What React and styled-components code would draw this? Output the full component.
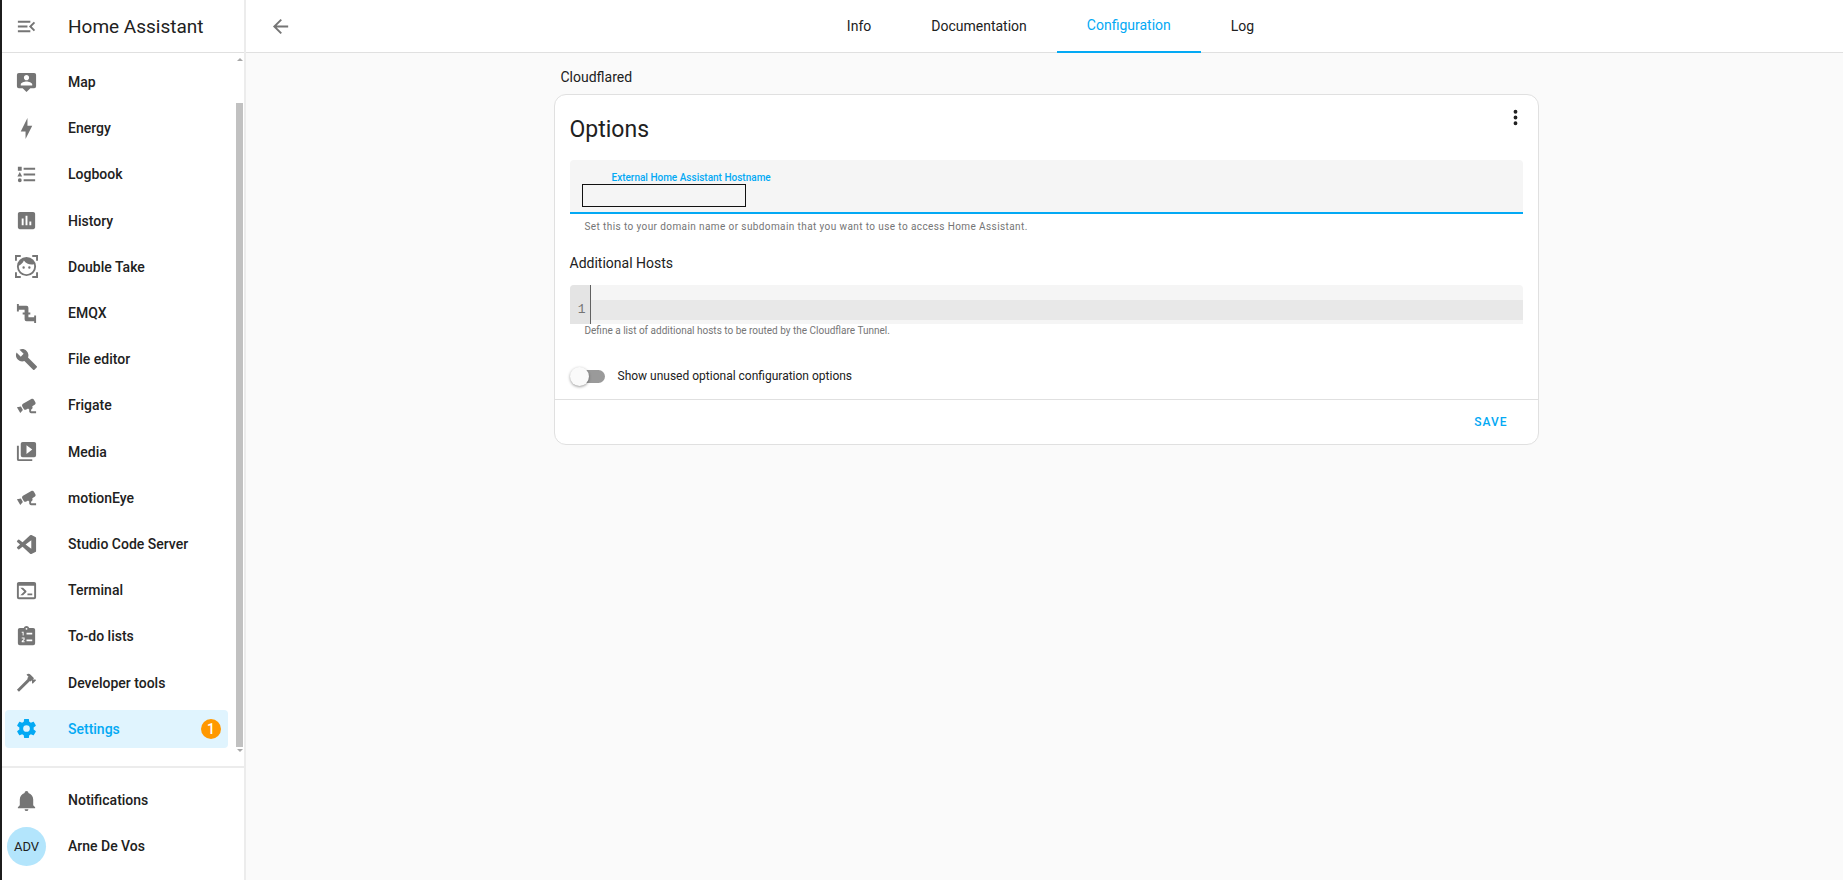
import { useState } from 'react';
import styled, { createGlobalStyle, css } from 'styled-components';

const GlobalStyle = createGlobalStyle`
  * { box-sizing: border-box; }
  body {
    margin: 0;
    background: #fafafa;
    color: #212121;
    font-family: Roboto, "Liberation Sans", sans-serif;
    font-size: 14px;
  }
  a { color: inherit; text-decoration: none; }
  button { border: 0; padding: 0; background: none; font: inherit; color: inherit; cursor: pointer; }
`;

const icons = {
  menuOpen: 'M21,15.61L19.59,17L14.58,12L19.59,7L21,8.39L17.44,12L21,15.61M3,6H16V8H3V6M3,13V11H13V13H3M3,18V16H16V18H3Z',
  arrowLeft: 'M20,11V13H8L13.5,18.5L12.08,19.92L4.16,12L12.08,4.08L13.5,5.5L8,11H20Z',
  dots: 'M12,16A2,2 0 0,1 14,18A2,2 0 0,1 12,20A2,2 0 0,1 10,18A2,2 0 0,1 12,16M12,10A2,2 0 0,1 14,12A2,2 0 0,1 12,14A2,2 0 0,1 10,12A2,2 0 0,1 12,10M12,4A2,2 0 0,1 14,6A2,2 0 0,1 12,8A2,2 0 0,1 10,6A2,2 0 0,1 12,4Z',
  map: 'M20,2H4A2,2 0 0,0 2,4V16A2,2 0 0,0 4,18H8L12,22L16,18H20A2,2 0 0,0 22,16V4A2,2 0 0,0 20,2M12,4.3C13.5,4.3 14.7,5.5 14.7,7C14.7,8.5 13.5,9.7 12,9.7C10.5,9.7 9.3,8.5 9.3,7C9.3,5.5 10.5,4.3 12,4.3M18,15H6V14.1C6,12.1 10,11 12,11C14,11 18,12.1 18,14.1V15Z',
  energy: 'M11 15H6L13 1V9H18L11 23V15Z',
  logbook: 'M5,9.5L7.5,14H2.5L5,9.5M3,4H7V8H3V4M5,20A2,2 0 0,0 7,18A2,2 0 0,0 5,16A2,2 0 0,0 3,18A2,2 0 0,0 5,20M9,5V7H21V5H9M9,19H21V17H9V19M9,13H21V11H9V13Z',
  history: 'M9 17H7V10H9V17M13 17H11V7H13V17M17 17H15V13H17V17M19 3H5C3.89 3 3 3.89 3 5V19C3 20.11 3.89 21 5 21H19C20.11 21 21 20.11 21 19V5C21 3.89 20.11 3 19 3Z',
  face: 'M9,11.75A1.25,1.25 0 0,0 7.75,13A1.25,1.25 0 0,0 9,14.25A1.25,1.25 0 0,0 10.25,13A1.25,1.25 0 0,0 9,11.75M15,11.75A1.25,1.25 0 0,0 13.75,13A1.25,1.25 0 0,0 15,14.25A1.25,1.25 0 0,0 16.25,13A1.25,1.25 0 0,0 15,11.75M12,2A10,10 0 0,0 2,12A10,10 0 0,0 12,22A10,10 0 0,0 22,12A10,10 0 0,0 12,2M12,20C7.59,20 4,16.41 4,12C4,11.71 4,11.42 4.05,11.14C6.41,10.09 8.28,8.16 9.26,5.77C11.07,8.33 14.05,10 17.42,10C18.2,10 18.95,9.91 19.67,9.74C19.88,10.45 20,11.21 20,12C20,16.41 16.41,20 12,20M0,0H6V2H2V6H0V0M24,0V6H22V2H18V0H24M0,24V18H2V22H6V24H0M24,24H18V22H22V18H24V24Z',
  pipe: 'M22,14H20V16H14V13H16V11H14V6A2,2 0 0,0 12,4H4V2H2V10H4V8H10V11H8V13H10V18A2,2 0 0,0 12,20H20V22H22V14Z',
  wrench: 'M22.7,19L13.6,9.9C14.5,7.6 14,4.9 12.1,3C10.1,1 7.1,0.6 4.7,1.7L9,6L6,9L1.6,4.7C0.4,7.1 0.9,10.1 2.9,12.1C4.8,14 7.5,14.5 9.8,13.6L18.9,22.7C19.3,23.1 19.9,23.1 20.3,22.7L22.6,20.4C23.1,20 23.1,19.3 22.7,19Z',
  cctv: 'M18.15,4.94C17.77,4.91 17.37,5 17,5.2L8.35,10.2C7.39,10.76 7.07,12 7.62,12.94L9.12,15.53C9.67,16.5 10.89,16.82 11.85,16.27L13.65,15.23C13.92,15.69 14.32,16.06 14.81,16.27V18.04C14.81,19.13 15.7,20 16.81,20H22V18.04H16.81V16.27C17.72,15.87 18.31,14.97 18.31,14C18.31,13.54 18.19,13.11 17.97,12.73L20.5,11.27C21.47,10.71 21.8,9.5 21.24,8.53L19.74,5.94C19.4,5.34 18.79,5 18.15,4.94M6.22,13.17L2,13.87L2.75,15.17L4.75,18.63L5.5,19.93L8.22,16.63L6.22,13.17Z',
  media: 'M4,6H2V20A2,2 0 0,0 4,22H18V20H4V6M20,2H8A2,2 0 0,0 6,4V16A2,2 0 0,0 8,18H20A2,2 0 0,0 22,16V4A2,2 0 0,0 20,2M12,14.5V5.5L18,10L12,14.5Z',
  vscode: 'M23.15 2.587L18.21.21a1.494 1.494 0 0 0-1.705.29l-9.46 8.63-4.12-3.128a.999.999 0 0 0-1.276.057L.327 7.261A1 1 0 0 0 .326 8.74L3.899 12 .326 15.26a1 1 0 0 0 .001 1.479L1.65 17.94a.999.999 0 0 0 1.276.057l4.12-3.128 9.46 8.63a1.492 1.492 0 0 0 1.704.29l4.942-2.377A1.5 1.5 0 0 0 24 20.06V3.939a1.5 1.5 0 0 0-.85-1.352zm-5.146 14.861L10.826 12l7.178-5.448v10.896z',
  console: 'M20,19V7H4V19H20M20,3A2,2 0 0,1 22,5V19A2,2 0 0,1 20,21H4A2,2 0 0,1 2,19V5C2,3.89 2.9,3 4,3H20M13,17V15H18V17H13M9.58,13L5.57,9H8.4L11.7,12.3C12.09,12.69 12.09,13.33 11.7,13.72L8.42,17H5.59L9.58,13Z',
  todo: 'M19,3H14.82C14.4,1.84 13.3,1 12,1C10.7,1 9.6,1.84 9.18,3H5A2,2 0 0,0 3,5V19A2,2 0 0,0 5,21H19A2,2 0 0,0 21,19V5A2,2 0 0,0 19,3M12,3A1,1 0 0,1 13,4A1,1 0 0,1 12,5A1,1 0 0,1 11,4A1,1 0 0,1 12,3M7,7H9V11H8V8H7V7M7,13H10V15.5L8.4,17H10V18H7V16.7L9,14.8V14H7V13M12,8H18V10H12V8M12,15H18V17H12V15Z',
  hammer: 'M2,19.63L13.43,8.2L12.72,7.5L14.14,6.07L12,3.89C13.2,2.7 15.09,2.7 16.27,3.89L19.87,7.5L18.45,8.91H21.29L22,9.62L18.45,13.21L17.74,12.5V9.62L16.27,11.04L15.56,10.33L4.13,21.76L2,19.63Z',
  cog: 'M12,15.5A3.5,3.5 0 0,1 8.5,12A3.5,3.5 0 0,1 12,8.5A3.5,3.5 0 0,1 15.5,12A3.5,3.5 0 0,1 12,15.5M19.43,12.97C19.47,12.65 19.5,12.33 19.5,12C19.5,11.67 19.47,11.34 19.43,11L21.54,9.37C21.73,9.22 21.78,8.95 21.66,8.73L19.66,5.27C19.54,5.05 19.27,4.96 19.05,5.05L16.56,6.05C16.04,5.66 15.5,5.32 14.87,5.07L14.5,2.42C14.46,2.18 14.25,2 14,2H10C9.75,2 9.54,2.18 9.5,2.42L9.13,5.07C8.5,5.32 7.96,5.66 7.44,6.05L4.95,5.05C4.73,4.96 4.46,5.05 4.34,5.27L2.34,8.73C2.21,8.95 2.27,9.22 2.46,9.37L4.57,11C4.53,11.34 4.5,11.67 4.5,12C4.5,12.33 4.53,12.65 4.57,12.97L2.46,14.63C2.27,14.78 2.21,15.05 2.34,15.27L4.34,18.73C4.46,18.95 4.73,19.03 4.95,18.95L7.44,17.94C7.96,18.34 8.5,18.68 9.13,18.93L9.5,21.58C9.54,21.82 9.75,22 10,22H14C14.25,22 14.46,21.82 14.5,21.58L14.87,18.93C15.5,18.67 16.04,18.34 16.56,17.94L19.05,18.95C19.27,19.03 19.54,18.95 19.66,18.73L21.66,15.27C21.78,15.05 21.73,14.78 21.54,14.63L19.43,12.97Z',
  bell: 'M21,19V20H3V19L5,17V11C5,7.9 7.03,5.17 10,4.29C10,4.19 10,4.1 10,4A2,2 0 0,1 12,2A2,2 0 0,1 14,4C14,4.1 14,4.19 14,4.29C16.97,5.17 19,7.9 19,11V17L21,19M14,21A2,2 0 0,1 12,23A2,2 0 0,1 10,21',
};

const panels = [
  { name: 'Map', icon: 'map' },
  { name: 'Energy', icon: 'energy' },
  { name: 'Logbook', icon: 'logbook' },
  { name: 'History', icon: 'history' },
  { name: 'Double Take', icon: 'face' },
  { name: 'EMQX', icon: 'pipe' },
  { name: 'File editor', icon: 'wrench' },
  { name: 'Frigate', icon: 'cctv' },
  { name: 'Media', icon: 'media' },
  { name: 'motionEye', icon: 'cctv' },
  { name: 'Studio Code Server', icon: 'vscode', viewBox: '-2.4 -2.4 28.8 28.8' },
  { name: 'Terminal', icon: 'console' },
  { name: 'To-do lists', icon: 'todo' },
  { name: 'Developer tools', icon: 'hammer' },
  { name: 'Settings', icon: 'cog', badge: 1, active: true },
];

const tabs = ['Info', 'Documentation', 'Configuration', 'Log'];

const Svg = styled.svg`
  display: block;
  flex: none;
  width: 23px;
  height: 23px;
  fill: currentColor;
`;

const Icon = ({ name, viewBox = '0 0 24 24' }) => (
  <Svg viewBox={viewBox} aria-hidden="true"><path fillRule="evenodd" d={icons[name]} /></Svg>
);

const Page = styled.div`
  display: flex;
  min-height: 100vh;
  border-left: 2px solid #1c1c1c;
`;

const Sidebar = styled.aside`
  display: flex;
  flex-direction: column;
  flex: none;
  width: 244px;
  height: 100vh;
  background: #fff;
  border-right: 2px solid #ececec;
`;

const SidebarHeader = styled.div`
  display: flex;
  align-items: center;
  flex: none;
  gap: 30px;
  height: 53px;
  padding-left: 13px;
  border-bottom: 1px solid #e0e0e0;
  font-size: 19px;
`;

const IconButton = styled.button`
  color: ${({ $dark }) => ($dark ? '#212121' : '#757575')};
`;

const PanelArea = styled.nav`
  display: flex;
  flex: 1;
  min-height: 0;
  border-bottom: 2px solid #ececec;
`;

const PanelList = styled.ul`
  display: flex;
  flex: 1;
  flex-direction: column;
  justify-content: space-between;
  margin: 0;
  padding: 10px 7px 18px 3px;
  list-style: none;
`;

const PanelLink = styled.a`
  display: flex;
  align-items: center;
  gap: 30px;
  height: 38px;
  padding: 0 7px 0 10px;
  border-radius: 4px;
  font-weight: 500;
  background: ${({ $active }) => ($active ? '#e0f4fe' : 'transparent')};
  color: ${({ $active }) => ($active ? '#03a9f4' : '#212121')};

  svg { color: ${({ $active }) => ($active ? '#03a9f4' : '#757575')}; }
`;

const Badge = styled.span`
  margin-left: auto;
  width: 20px;
  height: 20px;
  border-radius: 50%;
  background: #ff9800;
  color: #fff;
  line-height: 20px;
  text-align: center;
`;

const ScrollTrack = styled.div`
  display: flex;
  flex-direction: column;
  align-items: center;
  width: 9px;
  padding: 5px 0 14px;
  gap: 2px;
`;

const ScrollArrow = styled.svg`
  width: 6px;
  height: 3px;
  fill: #a8a8a8;
`;

const ScrollThumb = styled.div`
  flex: 1;
  width: 7px;
  margin-top: 40px;
  background: #c1c1c1;
`;

const SidebarFooter = styled.div`
  display: flex;
  flex-direction: column;
  flex: none;
  gap: 8px;
  padding: 13px 7px 15px 3px;
`;

const Avatar = styled.span`
  flex: none;
  width: 39px;
  height: 39px;
  margin: 0 -8px;
  border-radius: 50%;
  background: #b3e5fc;
  line-height: 39px;
  text-align: center;
  font-weight: 400;
  font-size: 13px;
`;

const Main = styled.main`
  flex: 1;
  min-width: 0;
`;

const Toolbar = styled.header`
  display: flex;
  height: 53px;
  padding: 0 34px 0 23px;
  background: #fff;
  border-bottom: 1px solid #e0e0e0;
`;

const Tabs = styled.nav`
  display: flex;
  flex: 1;
  justify-content: center;
`;

const Tab = styled.a`
  display: flex;
  align-items: center;
  height: 53px;
  padding: 0 30px 2px;
  ${({ $active }) => $active && css`
    color: #03a9f4;
    border-bottom: 2px solid #03a9f4;
  `}
`;

const ContentArea = styled.div`
  padding: 16px 0 16px 3px;
`;

const Content = styled.div`
  width: 62%;
  max-width: 985px;
  margin: 0 auto;
`;

const AddonName = styled.h1`
  margin: 0 0 8px;
  padding-left: 7px;
  font-size: 14px;
  font-weight: 400;
  line-height: 17px;
`;

const Card = styled.form`
  background: #fff;
  border: 1px solid #e0e0e0;
  border-radius: 12px;
`;

const CardBody = styled.div`
  padding: 11px 15px 13px;
`;

const CardHeader = styled.div`
  display: flex;
  justify-content: space-between;
  align-items: flex-start;
  height: 54px;
  margin-right: -4px;
`;

const CardTitle = styled.h2`
  margin: 0;
  font-size: 23px;
  font-weight: 400;
  line-height: 48px;
`;

const Field = styled.div`
  display: flex;
  flex-direction: column;
  align-items: flex-start;
  height: 54px;
  padding: 11px 12px 0;
  background: #f5f5f5;
  border-bottom: 2px solid #03a9f4;
  border-radius: 4px 4px 0 0;
`;

const FieldLabel = styled.label`
  margin-left: 30px;
  color: #03a9f4;
  font-size: 10px;
  font-weight: 500;
  line-height: 13px;
`;

const HostInput = styled.input`
  width: 164px;
  height: 23px;
  border: 1px solid #111;
  background: #f5f5f5;
  font: inherit;
  outline: 0;
`;

const Helper = styled.p`
  margin: 0;
  padding: 0 15px;
  color: #757575;
  font-size: 10px;
  line-height: 13px;
`;

const HostHelper = styled(Helper)`
  padding-top: 6px;
  letter-spacing: 0.4px;
`;

const SectionLabel = styled.label`
  display: block;
  margin: 22px 0 13px;
  line-height: 17px;
`;

const Editor = styled.div`
  display: flex;
  height: 39px;
  border-radius: 4px 4px 0 0;
  background: #f5f5f5;
  overflow: hidden;
`;

const Gutter = styled.div`
  width: 21px;
  padding: 15px 4px 0 0;
  border-right: 1px solid #616161;
  background: #e4e4e4;
  color: #757575;
  font-family: "Liberation Mono", monospace;
  font-size: 13px;
  line-height: 20px;
  text-align: right;
`;

const EditorInput = styled.textarea`
  flex: 1;
  height: 20px;
  margin-top: 15px;
  padding: 0 6px;
  border: 0;
  outline: 0;
  resize: none;
  background: #e8e8e8;
  font: 13px/20px "Liberation Mono", monospace;
`;

const SwitchRow = styled.label`
  display: flex;
  align-items: center;
  gap: 13px;
  margin-top: 29px;
  font-size: 12px;
  line-height: 20px;
`;

const Switch = styled.input`
  appearance: none;
  display: flex;
  align-items: center;
  width: 35px;
  height: 13px;
  margin: 0;
  border-radius: 7px;
  background: linear-gradient(#9a9a9a, #9a9a9a) right / 31px 100% no-repeat;
  cursor: pointer;

  &::before {
    content: '';
    width: 19px;
    height: 19px;
    border-radius: 50%;
    background: #fafafa;
    box-shadow: 0 1px 3px rgba(0, 0, 0, 0.4);
  }

  &:checked { justify-content: flex-end; }
  &:checked::before { background: #03a9f4; }
`;

const CardActions = styled.div`
  display: flex;
  justify-content: flex-end;
  padding: 5px 22px 5px 8px;
  border-top: 1px solid #e0e0e0;
`;

const SaveButton = styled.button`
  height: 34px;
  padding: 0 8px;
  color: #03a9f4;
  font-size: 12px;
  font-weight: 500;
  letter-spacing: 1px;
`;

export default function App() {
  const [hostname, setHostname] = useState('');
  const [showUnused, setShowUnused] = useState(false);

  return (
    <Page>
      <GlobalStyle />
      <Sidebar>
        <SidebarHeader>
          <IconButton aria-label="Toggle sidebar"><Icon name="menuOpen" /></IconButton>
          <span>Home Assistant</span>
        </SidebarHeader>
        <PanelArea>
          <PanelList>
            {panels.map(({ name, icon, viewBox, badge, active }) => (
              <li key={name}>
                <PanelLink href="#" $active={active}>
                  <Icon name={icon} viewBox={viewBox} />
                  <span>{name}</span>
                  {badge && <Badge>{badge}</Badge>}
                </PanelLink>
              </li>
            ))}
          </PanelList>
          {/* scroll bar */}
          <ScrollTrack>
            <ScrollArrow viewBox="0 0 6 3"><path d="M0 3L3 0L6 3Z" /></ScrollArrow>
            <ScrollThumb />
            <ScrollArrow viewBox="0 0 6 3"><path d="M0 0L3 3L6 0Z" /></ScrollArrow>
          </ScrollTrack>
        </PanelArea>
        <SidebarFooter>
          <PanelLink href="#">
            <Icon name="bell" />
            <span>Notifications</span>
          </PanelLink>
          <PanelLink href="#">
            <Avatar>ADV</Avatar>
            <span>Arne De Vos</span>
          </PanelLink>
        </SidebarFooter>
      </Sidebar>

      <Main>
        <Toolbar>
          <IconButton aria-label="Back"><Icon name="arrowLeft" /></IconButton>
          <Tabs>
            {tabs.map((tab) => (
              <Tab key={tab} href="#" $active={tab === 'Configuration'}>{tab}</Tab>
            ))}
          </Tabs>
        </Toolbar>

        <ContentArea>
          <Content>
            <AddonName>Cloudflared</AddonName>
            <Card onSubmit={(e) => e.preventDefault()}>
              <CardBody>
                <CardHeader>
                  <CardTitle>Options</CardTitle>
                  <IconButton type="button" aria-label="Menu" $dark><Icon name="dots" /></IconButton>
                </CardHeader>
                <Field>
                  <FieldLabel htmlFor="hostname">External Home Assistant Hostname</FieldLabel>
                  <HostInput id="hostname" value={hostname} onChange={(e) => setHostname(e.target.value)} />
                </Field>
                <HostHelper>
                  Set this to your domain name or subdomain that you want to use to access Home Assistant.
                </HostHelper>

                <SectionLabel htmlFor="hosts">Additional Hosts</SectionLabel>
                <Editor>
                  <Gutter>1</Gutter>
                  <EditorInput id="hosts" rows={1} />
                </Editor>
                <Helper>Define a list of additional hosts to be routed by the Cloudflare Tunnel.</Helper>

                <SwitchRow>
                  <Switch
                    type="checkbox"
                    role="switch"
                    checked={showUnused}
                    onChange={(e) => setShowUnused(e.target.checked)}
                  />
                  Show unused optional configuration options
                </SwitchRow>
              </CardBody>
              <CardActions>
                <SaveButton type="submit">SAVE</SaveButton>
              </CardActions>
            </Card>
          </Content>
        </ContentArea>
      </Main>
    </Page>
  );
}
